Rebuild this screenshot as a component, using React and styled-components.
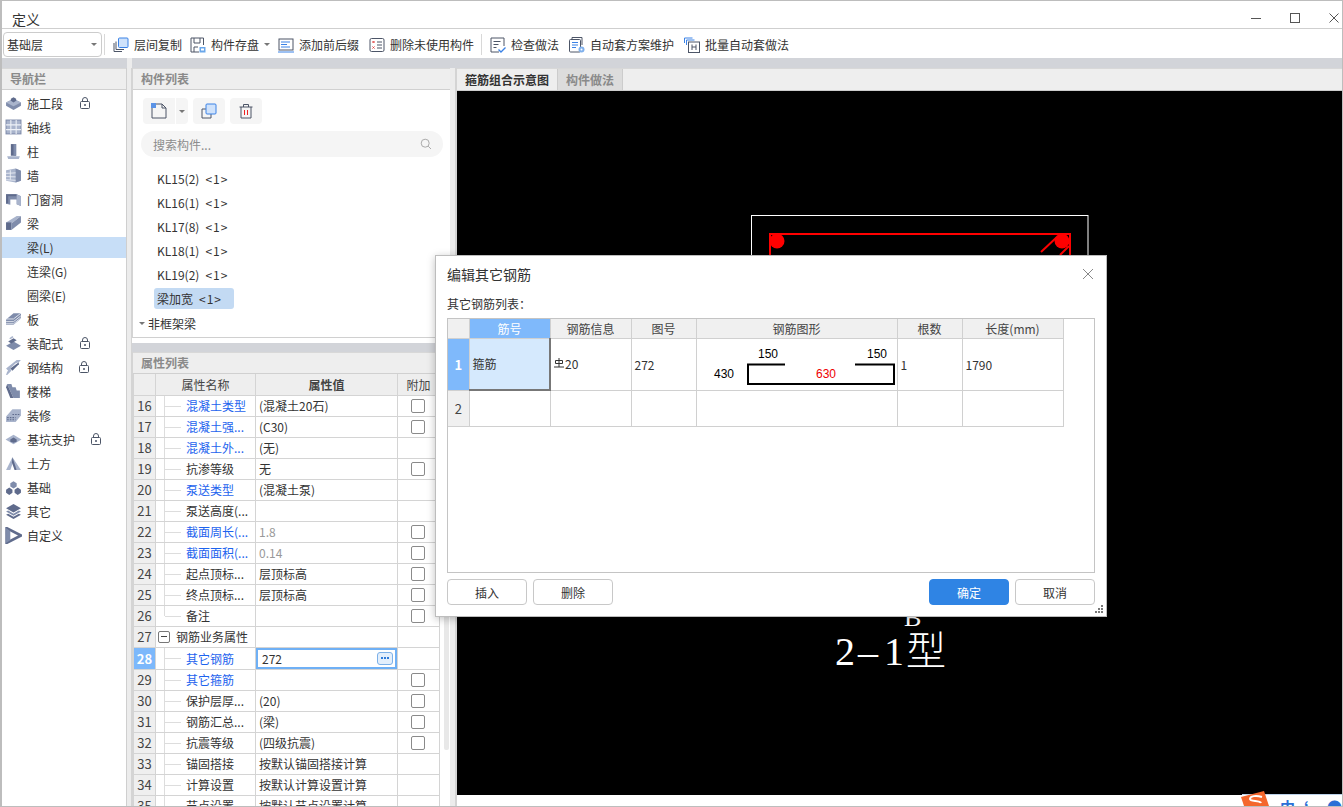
import React from 'react';
import styled, { createGlobalStyle } from 'styled-components';

const GlobalStyle = createGlobalStyle`
  html, body { margin: 0; padding: 0; background: #fff; }
  body {
    font-family: "Noto Sans CJK SC", "Liberation Sans", sans-serif;
    font-size: 12px;
    color: #333;
    overflow: hidden;
  }
  * { box-sizing: border-box; }
`;

const Window = styled.div`
  position: relative;
  width: 1343px;
  height: 807px;
  display: flex;
  flex-direction: column;
  border: 1px solid #bdbdbd;
  border-left-width: 2px;
  overflow: hidden;
`;

const TitleBar = styled.div`
  height: 28px;
  flex: none;
  display: flex;
  align-items: flex-end;
  justify-content: space-between;
  padding: 0 2px 2px 10px;
  border-bottom: 1px solid #cfcfcf;
  font-size: 14px;
  line-height: 14px;
`;

const WinButtons = styled.div`
  display: flex;
  gap: 27px;
  align-items: center;
  height: 12px;
  margin-bottom: 2px;
`;

const Toolbar = styled.div`
  height: 29px;
  flex: none;
  display: flex;
  align-items: center;
  padding: 2px 0 0 1px;
`;

const Combo = styled.div`
  width: 99px;
  height: 25px;
  display: flex;
  align-items: center;
  justify-content: space-between;
  padding: 0 4px 0 3px;
  border: 1px solid #ccc;
  border-radius: 4px;
`;

const Caret = styled.span`
  width: 0;
  height: 0;
  border-left: 3px solid transparent;
  border-right: 3px solid transparent;
  border-top: 3px solid #777;
`;

const ToolCaret = styled(Caret)`
  margin: 0 8px 0 5px;
`;

const ToolSep = styled.span`
  width: 1px;
  height: 21px;
  background: #d8d8d8;
  margin: 0 8px 0 ${p => p.$left}px;
`;

const ToolItem = styled.div`
  display: flex;
  align-items: center;
  gap: 5px;
  white-space: nowrap;
  margin-right: ${p => p.$right}px;
`;

const Band = styled.div`
  height: 10px;
  flex: none;
  display: flex;
  background: #d2d4d9;
`;

const BandGap = styled.div`
  width: 5px;
  margin-left: 125px;
  background: #ececec;
`;

const Main = styled.div`
  flex: 1;
  min-height: 0;
  display: flex;
`;

const Nav = styled.div`
  width: 125px;
  flex: none;
  border-right: 1px solid #cfcfcf;
`;

const Splitter = styled.div`
  width: ${p => p.$w}px;
  flex: none;
  background: #ececec;
  border-right: 1px solid #d4d4d4;
`;

const PanelHead = styled.div`
  height: 22px;
  display: flex;
  align-items: center;
  padding: 0 0 1px ${p => p.$pad || 8}px;
  background: #eee;
  border-top: 1px solid #d8d8d8;
  border-bottom: 1px solid #d0d0d0;
  color: #8a8a8a;
  font-weight: 700;
`;

const NavList = styled.div`
  padding-top: 1px;
`;

const NavRow = styled.div`
  height: ${p => (p.$active ? 21 : 24)}px;
  margin: ${p => (p.$active ? '2px 0 1px' : '0')};
  display: flex;
  align-items: center;
  padding-left: ${p => (p.$sub ? 25 : 3)}px;
  background: ${p => (p.$active ? '#c7def7' : 'transparent')};
  white-space: nowrap;
`;

const NavLabel = styled.span`
  margin-left: 5px;
`;

const SubLabel = styled.span``;

const Lock = styled.span`
  display: flex;
  margin-left: ${p => p.$gap}px;
`;

const Middle = styled.div`
  width: 318px;
  flex: none;
  display: flex;
  flex-direction: column;
`;

const ListPanel = styled.div`
  height: 270px;
  flex: none;
  border-left: 1px solid #d4d4d4;
  border-bottom: 1px solid #d0d0d0;
`;

const ListTools = styled.div`
  display: flex;
  padding: 8px 0 0 10px;
  height: 34px;
`;

const ToolBtn = styled.button`
  width: ${p => p.$w || 32}px;
  height: 26px;
  margin: 0 ${p => p.$mr ?? 5}px 0 0;
  padding: 0;
  display: flex;
  align-items: center;
  justify-content: center;
  border: none;
  background: #f5f5f5;
  border-radius: ${p => p.$radius || '4px'};
`;

const Search = styled.div`
  width: 302px;
  height: 26px;
  margin: 7px 0 9px 8px;
  padding: 0 11px 0 12px;
  display: flex;
  align-items: center;
  justify-content: space-between;
  background: #f5f5f5;
  border-radius: 13px;
  color: #8c8c8c;
`;

const CompRow = styled.div`
  height: 24px;
  display: flex;
  align-items: center;
  padding-left: 24px;
  white-space: pre;
`;

const CompActive = styled.div`
  width: 80px;
  height: 21px;
  margin: 2px 0 1px 21px;
  padding-left: 3px;
  display: flex;
  align-items: center;
  background: #c3daf3;
  border-radius: 3px;
  white-space: pre;
`;

const RefCount = styled.span`
  margin-left: 6px;
  letter-spacing: 1px;
`;

const GroupRow = styled.div`
  height: 24px;
  display: flex;
  align-items: center;
  padding: 2px 0 0 6px;
  gap: 3px;
`;

const MiddleBand = styled.div`
  height: 14px;
  flex: none;
  background: #fff;
  & > div {
    height: 9px;
    margin-top: 5px;
    background: #d2d4d9;
  }
`;

const PropPanel = styled.div`
  flex: 1;
  min-height: 0;
  border-left: 1px solid #d4d4d4;
  overflow: hidden;
`;

const PropBody = styled.div`
  display: flex;
`;

const PropTable = styled.table`
  width: 306px;
  flex: none;
  table-layout: fixed;
  border-collapse: collapse;
`;

const PropTh = styled.th`
  height: 21px;
  padding: 0;
  background: #eee;
  border: 1px solid #d4d4d4;
  border-top: none;
  font-weight: ${p => (p.$bold ? 700 : 400)};
  color: #444;
`;

const IndexCell = styled.td`
  height: 21px;
  padding: 0;
  text-align: center;
  background: ${p => (p.$on ? '#7cb8fb' : '#efefef')};
  color: ${p => (p.$on ? '#fff' : '#444')};
  font-weight: ${p => (p.$on ? 700 : 400)};
  border: 1px solid #d4d4d4;
  font-size: 13px;
  line-height: 15px;
`;

const NameCell = styled.td`
  position: relative;
  height: 21px;
  padding: 0 0 0 ${p => (p.$group ? 2 : 30)}px;
  color: ${p => (p.$link ? '#1d63ee' : '#333')};
  border: 1px solid #d4d4d4;
  white-space: nowrap;
  overflow: hidden;
  ${p => !p.$group && `
    &::before {
      content: "";
      position: absolute;
      left: 8px;
      top: -1px;
      height: ${p.$last ? 11 : 22}px;
      border-left: 1px solid #ddd;
    }
    &::after {
      content: "";
      position: absolute;
      left: 9px;
      top: 10px;
      width: 16px;
      border-top: 1px solid #ddd;
    }
  `}
`;

const GroupName = styled.div`
  height: 19px;
  display: flex;
  align-items: center;
  gap: 6px;
`;

const ValueCell = styled.td`
  height: 21px;
  padding: 0 0 0 3px;
  color: ${p => (p.$muted ? '#999' : '#333')};
  border: 1px solid #d4d4d4;
  white-space: nowrap;
`;

const EditCell = styled.td`
  height: 21px;
  padding: 0;
  border: 1px solid #d4d4d4;
`;

const EditBox = styled.div`
  height: 21px;
  display: flex;
  align-items: center;
  justify-content: space-between;
  padding: 0 2px 0 4px;
  border: 2px solid #6fb0f5;
`;

const MoreBtn = styled.span`
  width: 16px;
  height: 13px;
  display: flex;
  align-items: center;
  justify-content: center;
  gap: 1px;
  background: #e3effc;
  border: 1px solid #7cb0e8;
  border-radius: 3px;
  & > i {
    width: 2px;
    height: 2px;
    background: #2f7bd9;
  }
`;

const AddonCell = styled.td`
  height: 21px;
  padding: 0;
  border: 1px solid #d4d4d4;
  text-align: center;
`;

const Check = styled.span`
  display: block;
  width: 14px;
  height: 14px;
  margin: 0 auto;
  position: relative;
  left: -1px;
  border: 1px solid #8a8a8a;
  border-radius: 2px;
  background: #fff;
`;

const Expander = styled.span`
  display: flex;
  flex: none;
  width: 12px;
  height: 12px;
  align-items: center;
  justify-content: center;
  border: 1px solid #777;
  border-radius: 2px;
  &::before {
    content: "";
    width: 6px;
    border-top: 1px solid #444;
  }
`;

const ScrollTrack = styled.div`
  width: 5px;
  height: 355px;
  margin: 21px 0 0 4px;
  background: #e8e8e8;
  border-radius: 2px;
`;

const Right = styled.div`
  flex: 1;
  min-width: 0;
  display: flex;
  flex-direction: column;
  border-left: 1px solid #d4d4d4;
`;

const Tabs = styled.div`
  height: 23px;
  flex: none;
  display: flex;
  background: #eee;
  border-top: 1px solid #d8d8d8;
  border-bottom: 1px solid #ccc;
`;

const Tab = styled.div`
  padding: 0 8px;
  display: flex;
  align-items: center;
  font-weight: 700;
  color: ${p => (p.$active ? '#333' : '#8a8a8a')};
  background: ${p => (p.$active ? '#eee' : '#dcdcdc')};
  border-right: 1px solid #ccc;
`;

const Canvas = styled.div`
  height: 704px;
  flex: none;
  background: #000;
  & > svg { display: block; }
`;

const Dialog = styled.div`
  position: absolute;
  left: 433px;
  top: 254px;
  width: 672px;
  height: 362px;
  padding: 0 11px;
  display: flex;
  flex-direction: column;
  background: #fff;
  border: 1px solid #bdbdbd;
  box-shadow: 0 2px 8px rgba(0, 0, 0, 0.25);
`;

const DialogHead = styled.div`
  height: 38px;
  flex: none;
  display: flex;
  align-items: center;
  justify-content: space-between;
  font-size: 14px;
  padding: 0 1px 3px 0;
  color: #333;
`;

const DialogLabel = styled.div`
  height: 24px;
  flex: none;
  display: flex;
  align-items: center;
  padding-bottom: 5px;
`;

const GridFrame = styled.div`
  width: 648px;
  height: 255px;
  flex: none;
  border: 1px solid #c4c4c4;
`;

const RebarTable = styled.table`
  width: 615px;
  table-layout: fixed;
  border-collapse: collapse;
`;

const RebarTh = styled.th`
  height: 19px;
  padding: 0;
  font-weight: 400;
  line-height: 17px;
  color: ${p => (p.$on ? '#fff' : '#444')};
  background: ${p => (p.$on ? '#7fb9fb' : '#f0f0f0')};
  border: 1px solid #d0d0d0;
  border-top: none;
  &:first-child { border-left: none; }
`;

const RebarIndex = styled.td`
  padding: 0;
  text-align: center;
  font-size: 13px;
  color: ${p => (p.$on ? '#fff' : '#444')};
  font-weight: ${p => (p.$on ? 700 : 400)};
  background: ${p => (p.$on ? '#7fb9fb' : '#f0f0f0')};
  border: 1px solid #d0d0d0;
  border-left: none;
`;

const RebarTd = styled.td`
  height: ${p => p.$h}px;
  padding: 0 0 0 3px;
  border: 1px solid #d0d0d0;
`;

const ShapeTd = styled.td`
  padding: 0;
  border: 1px solid #d0d0d0;
  & > svg { display: block; }
`;

const SelectedTd = styled.td`
  padding: 0 0 0 3px;
  background: #d5e9fd;
  border: 1px solid #d0d0d0;
  border-right: 2px solid #777;
  border-bottom: 2px solid #777;
`;

const GradeText = styled.span`
  display: inline-flex;
  align-items: center;
  gap: 1px;
  position: relative;
  top: -1px;
`;

const DialogFoot = styled.div`
  flex: 1;
  display: flex;
  align-items: flex-start;
  padding-top: 6px;
  gap: 6px;
`;

const FootBtn = styled.button`
  width: 80px;
  height: 26px;
  padding: 0;
  font: inherit;
  color: ${p => (p.$primary ? '#fff' : '#333')};
  background: ${p => (p.$primary ? '#2f84e4' : '#fff')};
  border: 1px solid ${p => (p.$primary ? '#2f84e4' : '#c8c8c8')};
  border-radius: 4px;
  margin-left: ${p => (p.$push ? 'auto' : '0')};
`;

const Grip = styled.svg`
  position: absolute;
  right: 3px;
  bottom: 3px;
`;

const ImeTray = styled.div`
  position: absolute;
  right: 0;
  bottom: 0;
  width: 100px;
  height: 12px;
  overflow: hidden;
  border-top: 1px solid #bcd2ea;
  color: #2a6fd6;
  font-weight: 700;
  font-size: 15px;
  line-height: 24px;
`;

const ImeLogo = styled.svg`
  position: absolute;
  right: 72px;
  bottom: 0;
`;

const ImeGlyph = styled.span`
  position: absolute;
  left: ${p => p.$left}px;
  top: 0;
`;

const ink = '#4c5567';
const accent = '#3b82e6';
const fill = '#cfe2fb';
const slate = '#7f8cab';
const slateDark = '#5f6b8c';
const slateLight = '#a9b4cc';

const Icon = ({ size = 16, children }) => (
  <svg width={size} height={size} viewBox="0 0 16 16" fill="none">{children}</svg>
);

const toolIcons = {
  copyFloor: (
    <>
      <path d="M1 6v8.5h8M3 4.5v8h8" stroke={ink} />
      <rect x="5.5" y="1" width="9.5" height="9.5" rx="1" fill={fill} stroke={accent} />
    </>
  ),
  save: (
    <>
      <path d="M13.5 8V1H1v14h8M4 1v5h6V1M4 15v-5h4" stroke={ink} />
      <rect x="9.5" y="10" width="6" height="5.5" fill="#6aa7ea" />
      <rect x="11" y="11.5" width="3" height="2" fill="#fff" />
    </>
  ),
  prefix: (
    <>
      <rect x="1" y="2" width="14" height="11" stroke={ink} />
      <path d="M0 15h16" stroke={accent} />
      <path d="M3 5h9M3 7.5h6M3 10h9" stroke={accent} />
    </>
  ),
  remove: (
    <>
      <rect x="1" y="1.5" width="14" height="13" rx="1.5" stroke={ink} />
      <path d="M3.5 4l2 2M5.5 4l-2 2M3.5 9.5l2 2M5.5 9.5l-2 2" stroke="#e23b3b" />
      <path d="M8 5h5M8 8h5M8 11h5" stroke={ink} />
    </>
  ),
  check: (
    <>
      <path d="M9 15H1V1h13v8" stroke={ink} />
      <path d="M3.5 4.5h7M3.5 7.5h5M3.5 10.5h3" stroke={ink} />
      <path d="M8.5 12.5l2.5 2.5 4.5-4.5" stroke={accent} strokeWidth="1.4" />
    </>
  ),
  scheme: (
    <>
      <path d="M3 2V0.5h10V8" stroke={ink} />
      <rect x="0.5" y="2.5" width="11" height="12.5" rx="1" stroke={ink} />
      <path d="M3 5.5h6M3 8h6M3 10.5h4" stroke={accent} />
      <circle cx="12.5" cy="12.5" r="3" fill="#7fb0ec" />
      <circle cx="12.5" cy="12.5" r="1" fill="#fff" />
    </>
  ),
  batch: (
    <>
      <path d="M0.5 6V1h8M2.5 8V3h8" stroke={accent} />
      <rect x="4.5" y="5" width="11" height="10.5" stroke={ink} />
      <path d="M8 7.5v5.5M12 7.5v5.5M8 10h4" stroke={ink} />
    </>
  ),
};

const navIcons = {
  stage: (
    <>
      <path d="M1 7l7-3.5L15 7v3l-7 4-7-4z" fill={slate} />
      <path d="M1 7l7 3.5L15 7 8 3.5z" fill={slateLight} />
      <path d="M5.5 3.5L8 2l2.5 1.5v2L8 7 5.5 5.5z" fill={slateDark} />
    </>
  ),
  axis: (
    <>
      <rect x="1" y="1" width="14" height="13" fill={slateLight} stroke={slate} />
      <path d="M5.5 1v13M10.5 1v13M1 5.5h14M1 10h14" stroke="#eef1f7" />
    </>
  ),
  column: (
    <>
      <path d="M5.5 1h5v11h-5z" fill={slateDark} />
      <path d="M8 1h2.5v11H8z" fill={slate} />
      <path d="M2 12.5h12l-1 2.5H3z" fill={slateLight} />
    </>
  ),
  wall: (
    <>
      <path d="M1 3l9-1.5 5 2V13l-5 1.5L1 13z" fill={slateLight} />
      <path d="M10 1.5l5 2V13l-5 1.5z" fill={slate} />
      <path d="M1 6l9-.5M1 9l9 .3M1 12l9 .5M5 3v9" stroke="#eef1f7" strokeWidth="0.8" />
    </>
  ),
  door: (
    <>
      <path d="M1 3l10 0 4 2v9l-4-1.5V8H5v5L1 12z" fill={slate} />
      <path d="M1 3h10v2H3v6L1 12z" fill={slateDark} />
      <path d="M11 3l4 2v9l-4-1.5z" fill={slateLight} />
    </>
  ),
  beam: (
    <>
      <path d="M1 7L11 1h4L6 8v6H1z" fill={slateLight} />
      <path d="M1 7h5v7H1z" fill={slateDark} />
      <path d="M6 8l9-7v6l-9 7z" fill={slate} />
    </>
  ),
  slab: (
    <>
      <path d="M1 8l7-6h7v5l-7 6H1z" fill={slate} />
      <path d="M1 7.5h7L15 2M1 10h7l7-5.5M1 12h7l7-5.5" stroke="#eef1f7" strokeWidth="0.8" />
    </>
  ),
  prefab: (
    <>
      <path d="M1 10l7-4 7 4-7 4z" fill={slate} />
      <path d="M3 6l5-3 3 2-5 3z" fill={slateDark} />
      <path d="M4 3l3-2 1 1-3 2z" fill={slateLight} />
    </>
  ),
  steel: (
    <>
      <path d="M1 9l10-8h4l-2 2-3 1-5 5 1 2-4 4H1l1-3 1-1z" fill={slateLight} />
      <path d="M5 9l8-6v2l-6 6z" fill={slateDark} />
    </>
  ),
  stairs: (
    <>
      <path d="M2 1h4l1 3h3l1 3h3v7H8z" fill={slate} />
      <path d="M2 1l6 13H5L1 4z" fill={slateDark} />
    </>
  ),
  finish: (
    <>
      <path d="M1 9l6-7h8v6l-5 6H1z" fill={slateLight} />
      <path d="M2 10h8M2 12h8M7 7h7" stroke={slateDark} strokeDasharray="1.5 1" />
    </>
  ),
  pit: (
    <>
      <path d="M0.5 8L8 3.5 15.5 8 8 12.5z" fill={slateLight} />
      <path d="M5 8l3-2 3 2v2l-3 1-3-1z" fill={slateDark} />
    </>
  ),
  earth: (
    <>
      <path d="M1 14L7 2l8 12H11L7.5 7 5 14z" fill={slateLight} />
      <path d="M7 2l4 12h-2L6.5 7z" fill={slateDark} />
    </>
  ),
  found: (
    <>
      <path d="M5 4l3-2 3 2v3L8 9 5 7z" fill={slate} />
      <path d="M1 10l3-2 3 2v3l-3 2-3-2z" fill={slateDark} />
      <path d="M9 10l3-2 3 2v3l-3 2-3-2z" fill={slateDark} />
    </>
  ),
  other: (
    <>
      <path d="M1 5l7-4 7 4-7 4z" fill={slateDark} />
      <path d="M1 8l2-1 5 3 5-3 2 1-7 4z" fill={slate} />
      <path d="M1 11l2-1 5 3 5-3 2 1-7 4z" fill={slateDark} />
    </>
  ),
  custom: (
    <>
      <path d="M1.5 1L15 8 1.5 15z" fill="none" stroke={slateDark} strokeWidth="2.4" />
      <path d="M1 1v14l4-2.5V4z" fill={slate} />
    </>
  ),
};

const LockIcon = () => (
  <svg width="10" height="12" viewBox="0 0 10 12" fill="none">
    <path d="M2.5 4.5V3a2.5 2.5 0 0 1 5 0v1.5" stroke={ink} />
    <rect x="0.5" y="4.5" width="9" height="7" rx="1" stroke={ink} />
    <circle cx="5" cy="8" r="1" fill={ink} />
  </svg>
);

const navItems = [
  { label: '施工段', icon: 'stage', lock: 17 },
  { label: '轴线', icon: 'axis' },
  { label: '柱', icon: 'column' },
  { label: '墙', icon: 'wall' },
  { label: '门窗洞', icon: 'door' },
  { label: '梁', icon: 'beam' },
  { label: '梁(L)', sub: true, active: true },
  { label: '连梁(G)', sub: true },
  { label: '圈梁(E)', sub: true },
  { label: '板', icon: 'slab' },
  { label: '装配式', icon: 'prefab', lock: 17 },
  { label: '钢结构', icon: 'steel', lock: 16 },
  { label: '楼梯', icon: 'stairs' },
  { label: '装修', icon: 'finish' },
  { label: '基坑支护', icon: 'pit', lock: 16 },
  { label: '土方', icon: 'earth' },
  { label: '基础', icon: 'found' },
  { label: '其它', icon: 'other' },
  { label: '自定义', icon: 'custom' },
];

const tools = [
  { icon: 'copyFloor', label: '层间复制', right: 8 },
  { icon: 'save', label: '构件存盘', right: 0, caret: true },
  { icon: 'prefix', label: '添加前后缀', right: 10 },
  { icon: 'remove', label: '删除未使用构件', right: 0 },
];

const tools2 = [
  { icon: 'check', label: '检查做法', right: 10 },
  { icon: 'scheme', label: '自动套方案维护', right: 10 },
  { icon: 'batch', label: '批量自动套做法', right: 0 },
];

const comps = ['KL15(2)', 'KL16(1)', 'KL17(8)', 'KL18(1)', 'KL19(2)'];

const props = [
  { n: 16, name: '混凝土类型', value: '(混凝土20石)', link: true, check: true },
  { n: 17, name: '混凝土强...', value: '(C30)', link: true, check: true },
  { n: 18, name: '混凝土外...', value: '(无)', link: true },
  { n: 19, name: '抗渗等级', value: '无', check: true },
  { n: 20, name: '泵送类型', value: '(混凝土泵)', link: true },
  { n: 21, name: '泵送高度(...' },
  { n: 22, name: '截面周长(...', value: '1.8', link: true, check: true, muted: true },
  { n: 23, name: '截面面积(...', value: '0.14', link: true, check: true, muted: true },
  { n: 24, name: '起点顶标...', value: '层顶标高', check: true },
  { n: 25, name: '终点顶标...', value: '层顶标高', check: true },
  { n: 26, name: '备注', check: true, last: true },
  { n: 27, name: '钢筋业务属性', group: true },
  { n: 28, name: '其它钢筋', value: '272', link: true, edit: true },
  { n: 29, name: '其它箍筋', link: true, check: true },
  { n: 30, name: '保护层厚...', value: '(20)', check: true },
  { n: 31, name: '钢筋汇总...', value: '(梁)', check: true },
  { n: 32, name: '抗震等级', value: '(四级抗震)', check: true },
  { n: 33, name: '锚固搭接', value: '按默认锚固搭接计算' },
  { n: 34, name: '计算设置', value: '按默认计算设置计算' },
  { n: 35, name: '节点设置', value: '按默认节点设置计算' },
];

const PropRow = ({ row }) => (
  <tr>
    <IndexCell $on={row.edit}>{row.n}</IndexCell>
    <NameCell $link={row.link} $group={row.group} $last={row.last}>
      {row.group ? <GroupName><Expander />{row.name}</GroupName> : row.name}
    </NameCell>
    {row.edit ? (
      <EditCell>
        <EditBox>
          {row.value}
          <MoreBtn><i /><i /><i /></MoreBtn>
        </EditBox>
      </EditCell>
    ) : (
      <ValueCell $muted={row.muted}>{row.value}</ValueCell>
    )}
    <AddonCell>{row.check && <Check />}</AddonCell>
  </tr>
);

const CadDrawing = () => (
  <svg width="882" height="704" viewBox="457 91 882 704">
    <rect x="751.5" y="215.5" width="336.5" height="400" stroke="#fff" fill="none" />
    <rect x="770" y="234" width="300" height="100" stroke="#f00" strokeWidth="2" fill="none" />
    <circle cx="777" cy="241" r="7.5" fill="#f00" />
    <circle cx="1062" cy="241" r="7.5" fill="#f00" />
    <path d="M1041 252l16-15M1060 255l9-9" stroke="#f00" strokeWidth="2" />
    <text x="904" y="626" fill="#fff" fontFamily="Liberation Serif, serif" fontSize="26">B</text>
    <text
      x="835 858 884 906"
      y="665"
      fill="#fff"
      fontFamily="Liberation Serif, Noto Sans CJK SC, serif"
      fontSize="40"
      fontWeight="300"
    >
      2–1型
    </text>
  </svg>
);

const App = () => (
  <>
    <GlobalStyle />
    <Window>
      <TitleBar>
        <span>定义</span>
        <WinButtons>
          <svg width="12" height="12" viewBox="0 0 12 12"><path d="M1 6.5h10" stroke="#555" /></svg>
          <svg width="12" height="12" viewBox="0 0 12 12" fill="none"><rect x="1.5" y="1.5" width="9" height="9" stroke="#555" /></svg>
          <svg width="12" height="12" viewBox="0 0 12 12"><path d="M1.5 1.5l9 9M10.5 1.5l-9 9" stroke="#555" /></svg>
        </WinButtons>
      </TitleBar>

      <Toolbar>
        <Combo>基础层<Caret /></Combo>
        <ToolSep $left={2} />
        {tools.map(t => (
          <React.Fragment key={t.label}>
            <ToolItem $right={t.right}>
              <Icon>{toolIcons[t.icon]}</Icon>
              {t.label}
            </ToolItem>
            {t.caret && <ToolCaret />}
          </React.Fragment>
        ))}
        <ToolSep $left={7} />
        {tools2.map(t => (
          <ToolItem key={t.label} $right={t.right}>
            <Icon>{toolIcons[t.icon]}</Icon>
            {t.label}
          </ToolItem>
        ))}
      </Toolbar>

      <Band><BandGap /></Band>

      <Main>
        <Nav>
          <PanelHead>导航栏</PanelHead>
          <NavList>
            {navItems.map(item => (
              <NavRow key={item.label} $sub={item.sub} $active={item.active}>
                {item.sub ? (
                  <SubLabel>{item.label}</SubLabel>
                ) : (
                  <>
                    <Icon size={17}>{navIcons[item.icon]}</Icon>
                    <NavLabel>{item.label}</NavLabel>
                  </>
                )}
                {item.lock && <Lock $gap={item.lock}><LockIcon /></Lock>}
              </NavRow>
            ))}
          </NavList>
        </Nav>

        <Splitter $w={5} />

        <Middle>
          <ListPanel>
            <PanelHead>构件列表</PanelHead>
            <ListTools>
              <ToolBtn $mr={1} $radius="4px 0 0 4px">
                <Icon size={16}>
                  <path d="M5 1h6l4 4v10H1V5" stroke={ink} />
                  <path d="M11 1v4h4" stroke={ink} />
                  <rect x="0" y="0" width="5" height="5" fill="#5b93e6" />
                </Icon>
              </ToolBtn>
              <ToolBtn $w={12} $radius="0 4px 4px 0"><Caret /></ToolBtn>
              <ToolBtn>
                <Icon size={16}>
                  <path d="M1 6v9h9" stroke={ink} />
                  <path d="M1 6h4M10 15v-4" stroke={ink} />
                  <rect x="5" y="1" width="10" height="10" rx="1" fill={fill} stroke={accent} />
                </Icon>
              </ToolBtn>
              <ToolBtn>
                <Icon size={16}>
                  <path d="M1.5 4h13M5.5 4V1.5h5V4M3 4v11h10V4" stroke={ink} />
                  <path d="M6.5 7v5M9.5 7v5" stroke="#e22" />
                </Icon>
              </ToolBtn>
            </ListTools>
            <Search>
              搜索构件...
              <svg width="12" height="12" viewBox="0 0 12 12" fill="none">
                <circle cx="5.2" cy="5.2" r="4" stroke="#aaa" />
                <path d="M8.2 8.2l2.8 2.8" stroke="#aaa" />
              </svg>
            </Search>
            {comps.map(c => <CompRow key={c}>{c}<RefCount>{'<1>'}</RefCount></CompRow>)}
            <CompActive>梁加宽<RefCount>{'<1>'}</RefCount></CompActive>
            <GroupRow><Caret />非框架梁</GroupRow>
          </ListPanel>
          <MiddleBand><div /></MiddleBand>
          <PropPanel>
            <PanelHead>属性列表</PanelHead>
            <PropBody>
              <PropTable>
                <colgroup>
                  <col style={{ width: 22 }} />
                  <col style={{ width: 100 }} />
                  <col style={{ width: 142 }} />
                  <col style={{ width: 42 }} />
                </colgroup>
                <thead>
                  <tr>
                    <PropTh />
                    <PropTh>属性名称</PropTh>
                    <PropTh $bold>属性值</PropTh>
                    <PropTh>附加</PropTh>
                  </tr>
                </thead>
                <tbody>
                  {props.map(row => <PropRow key={row.n} row={row} />)}
                </tbody>
              </PropTable>
              <ScrollTrack />
            </PropBody>
          </PropPanel>
        </Middle>

        <Splitter $w={6} />

        <Right>
          <Tabs>
            <Tab $active>箍筋组合示意图</Tab>
            <Tab>构件做法</Tab>
          </Tabs>
          <Canvas><CadDrawing /></Canvas>
        </Right>
      </Main>

      <Dialog>
        <DialogHead>
          编辑其它钢筋
          <svg width="12" height="12" viewBox="0 0 12 12"><path d="M1 1l10 10M11 1L1 11" stroke="#888" /></svg>
        </DialogHead>
        <DialogLabel>其它钢筋列表：</DialogLabel>
        <GridFrame>
          <RebarTable>
            <colgroup>
              <col style={{ width: 21 }} />
              <col style={{ width: 81 }} />
              <col style={{ width: 81 }} />
              <col style={{ width: 65 }} />
              <col style={{ width: 201 }} />
              <col style={{ width: 65 }} />
              <col style={{ width: 101 }} />
            </colgroup>
            <thead>
              <tr>
                <RebarTh />
                <RebarTh $on>筋号</RebarTh>
                <RebarTh>钢筋信息</RebarTh>
                <RebarTh>图号</RebarTh>
                <RebarTh>钢筋图形</RebarTh>
                <RebarTh>根数</RebarTh>
                <RebarTh>长度(mm)</RebarTh>
              </tr>
            </thead>
            <tbody>
              <tr>
                <RebarIndex $on>1</RebarIndex>
                <SelectedTd>箍筋</SelectedTd>
                <RebarTd $h={51}>
                  <GradeText>
                    <svg width="10" height="10" viewBox="0 0 10 10" fill="none">
                      <path d="M5 0v9M1.5 2.5h7v3h-7zM0 9h10" stroke="#333" />
                    </svg>
                    20
                  </GradeText>
                </RebarTd>
                <RebarTd $h={51}>272</RebarTd>
                <ShapeTd>
                  <svg width="201" height="51" viewBox="697 339 201 51" fontFamily="Liberation Sans, sans-serif" fontSize="12">
                    <path d="M785 364.5h-37v19.5h146v-19.5h-39" fill="none" stroke="#000" strokeWidth="2" />
                    <text x="758" y="358" fill="#000">150</text>
                    <text x="867" y="358" fill="#000">150</text>
                    <text x="714" y="378" fill="#000">430</text>
                    <text x="816" y="378" fill="#e00">630</text>
                  </svg>
                </ShapeTd>
                <RebarTd $h={51}>1</RebarTd>
                <RebarTd $h={51}>1790</RebarTd>
              </tr>
              <tr>
                <RebarIndex>2</RebarIndex>
                <RebarTd $h={36} />
                <RebarTd $h={36} />
                <RebarTd $h={36} />
                <RebarTd $h={36} />
                <RebarTd $h={36} />
                <RebarTd $h={36} />
              </tr>
            </tbody>
          </RebarTable>
        </GridFrame>
        <DialogFoot>
          <FootBtn>插入</FootBtn>
          <FootBtn>删除</FootBtn>
          <FootBtn $primary $push>确定</FootBtn>
          <FootBtn>取消</FootBtn>
        </DialogFoot>
        <Grip width="8" height="8" viewBox="0 0 8 8" fill="#777">
          <rect x="6" y="0" width="2" height="2" />
          <rect x="3" y="3" width="2" height="2" />
          <rect x="6" y="3" width="2" height="2" />
          <rect x="0" y="6" width="2" height="2" />
          <rect x="3" y="6" width="2" height="2" />
          <rect x="6" y="6" width="2" height="2" />
        </Grip>
      </Dialog>

      <ImeTray>
        <ImeGlyph $left={38}>中</ImeGlyph>
        <ImeGlyph $left={62}>ʻ</ImeGlyph>
        <ImeGlyph $left={85}>●</ImeGlyph>
      </ImeTray>
      <ImeLogo width="30" height="15" viewBox="0 0 30 15">
        <path d="M1 6L24 0l5 15H4z" fill="#f4672d" />
        <path d="M22 6c-6-2-12-1-12 2s10 1 11 4" fill="none" stroke="#fff" strokeWidth="2" />
      </ImeLogo>
    </Window>
  </>
);

export default App;
